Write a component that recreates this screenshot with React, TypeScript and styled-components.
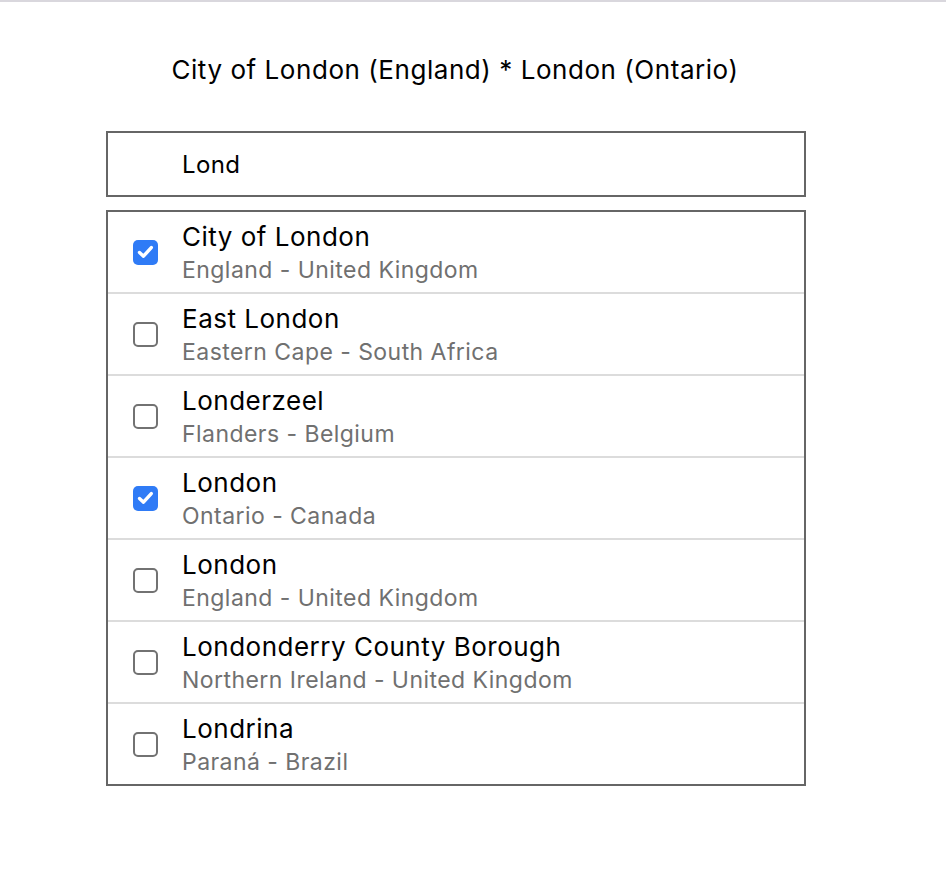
import React from "react";
import styled, { createGlobalStyle } from "styled-components";

const Global = createGlobalStyle`
  html, body { margin: 0; padding: 0; background: #fff; }
  body { font-family: Inter, "Noto Sans", "Liberation Sans", sans-serif; color: #000; }
`;

const TopRule = styled.div`
  height: 2px;
  background: #d9d7dd;
`;

const Page = styled.main`
  width: 700px;
  padding: 0 0 0 106px;
  display: flex;
  flex-direction: column;
`;

const Summary = styled.h1`
  margin: 0;
  height: 129px;
  display: flex;
  align-items: center;
  justify-content: center;
  padding-bottom: 0;
  padding-top: 6px;
  padding-right: 2px;
  box-sizing: border-box;
  font-size: 26px;
  font-weight: 400;
  letter-spacing: 0.55px;
`;

const Search = styled.input`
  box-sizing: border-box;
  height: 66px;
  width: 100%;
  border: 2px solid #666;
  border-radius: 0;
  outline: none;
  padding: 0 0 0 74px;
  font-family: inherit;
  font-size: 24px;
  letter-spacing: 0.4px;
  color: #000;
  background: #fff;
`;

const List = styled.ul`
  list-style: none;
  margin: 13px 0 0;
  padding: 0;
  border: 2px solid #666;
`;

const Row = styled.li<{ $last?: boolean }>`
  display: flex;
  align-items: center;
  height: 80px;
  padding-left: 25px;
  border-bottom: ${(p) => (p.$last ? "none" : "2px solid #dcdcdc")};
`;

const Box = styled.span<{ $checked: boolean }>`
  box-sizing: border-box;
  width: 25px;
  height: 25px;
  border-radius: 5px;
  flex: none;
  display: flex;
  align-items: center;
  justify-content: center;
  background: ${(p) => (p.$checked ? "#2f7bf6" : "#fff")};
  border: ${(p) => (p.$checked ? "none" : "2px solid #727272")};
`;

const Texts = styled.div`
  margin-left: 24px;
  padding-top: 3px;
  display: flex;
  flex-direction: column;
`;

const Name = styled.span`
  font-size: 26px;
  line-height: 30px;
  letter-spacing: 0.5px;
  color: #000;
`;

const Region = styled.span`
  font-size: 23px;
  line-height: 30px;
  letter-spacing: 0.45px;
  color: #707070;
  margin-top: 3px;
`;

const items = [
  { name: "City of London", region: "England - United Kingdom", checked: true },
  { name: "East London", region: "Eastern Cape - South Africa", checked: false },
  { name: "Londerzeel", region: "Flanders - Belgium", checked: false },
  { name: "London", region: "Ontario - Canada", checked: true },
  { name: "London", region: "England - United Kingdom", checked: false },
  { name: "Londonderry County Borough", region: "Northern Ireland - United Kingdom", checked: false },
  { name: "Londrina", region: "Paraná - Brazil", checked: false },
];

export default function App() {
  return (
    <>
      <Global />
      <TopRule />
      <Page>
        <Summary>City of London (England) * London (Ontario)</Summary>
        <Search defaultValue="Lond" />
        <List>
          {items.map((it, i) => (
            <Row key={i} $last={i === items.length - 1}>
              <Box $checked={it.checked}>
                {it.checked && (
                  <svg width="17" height="14" viewBox="0 0 17 14">
                    <path d="M2.5 7.5 L6.5 11.2 L14.3 2.6" fill="none" stroke="#fff" strokeWidth="3.4" strokeLinecap="round" strokeLinejoin="round" />
                  </svg>
                )}
              </Box>
              <Texts>
                <Name>{it.name}</Name>
                <Region>{it.region}</Region>
              </Texts>
            </Row>
          ))}
        </List>
      </Page>
    </>
  );
}
